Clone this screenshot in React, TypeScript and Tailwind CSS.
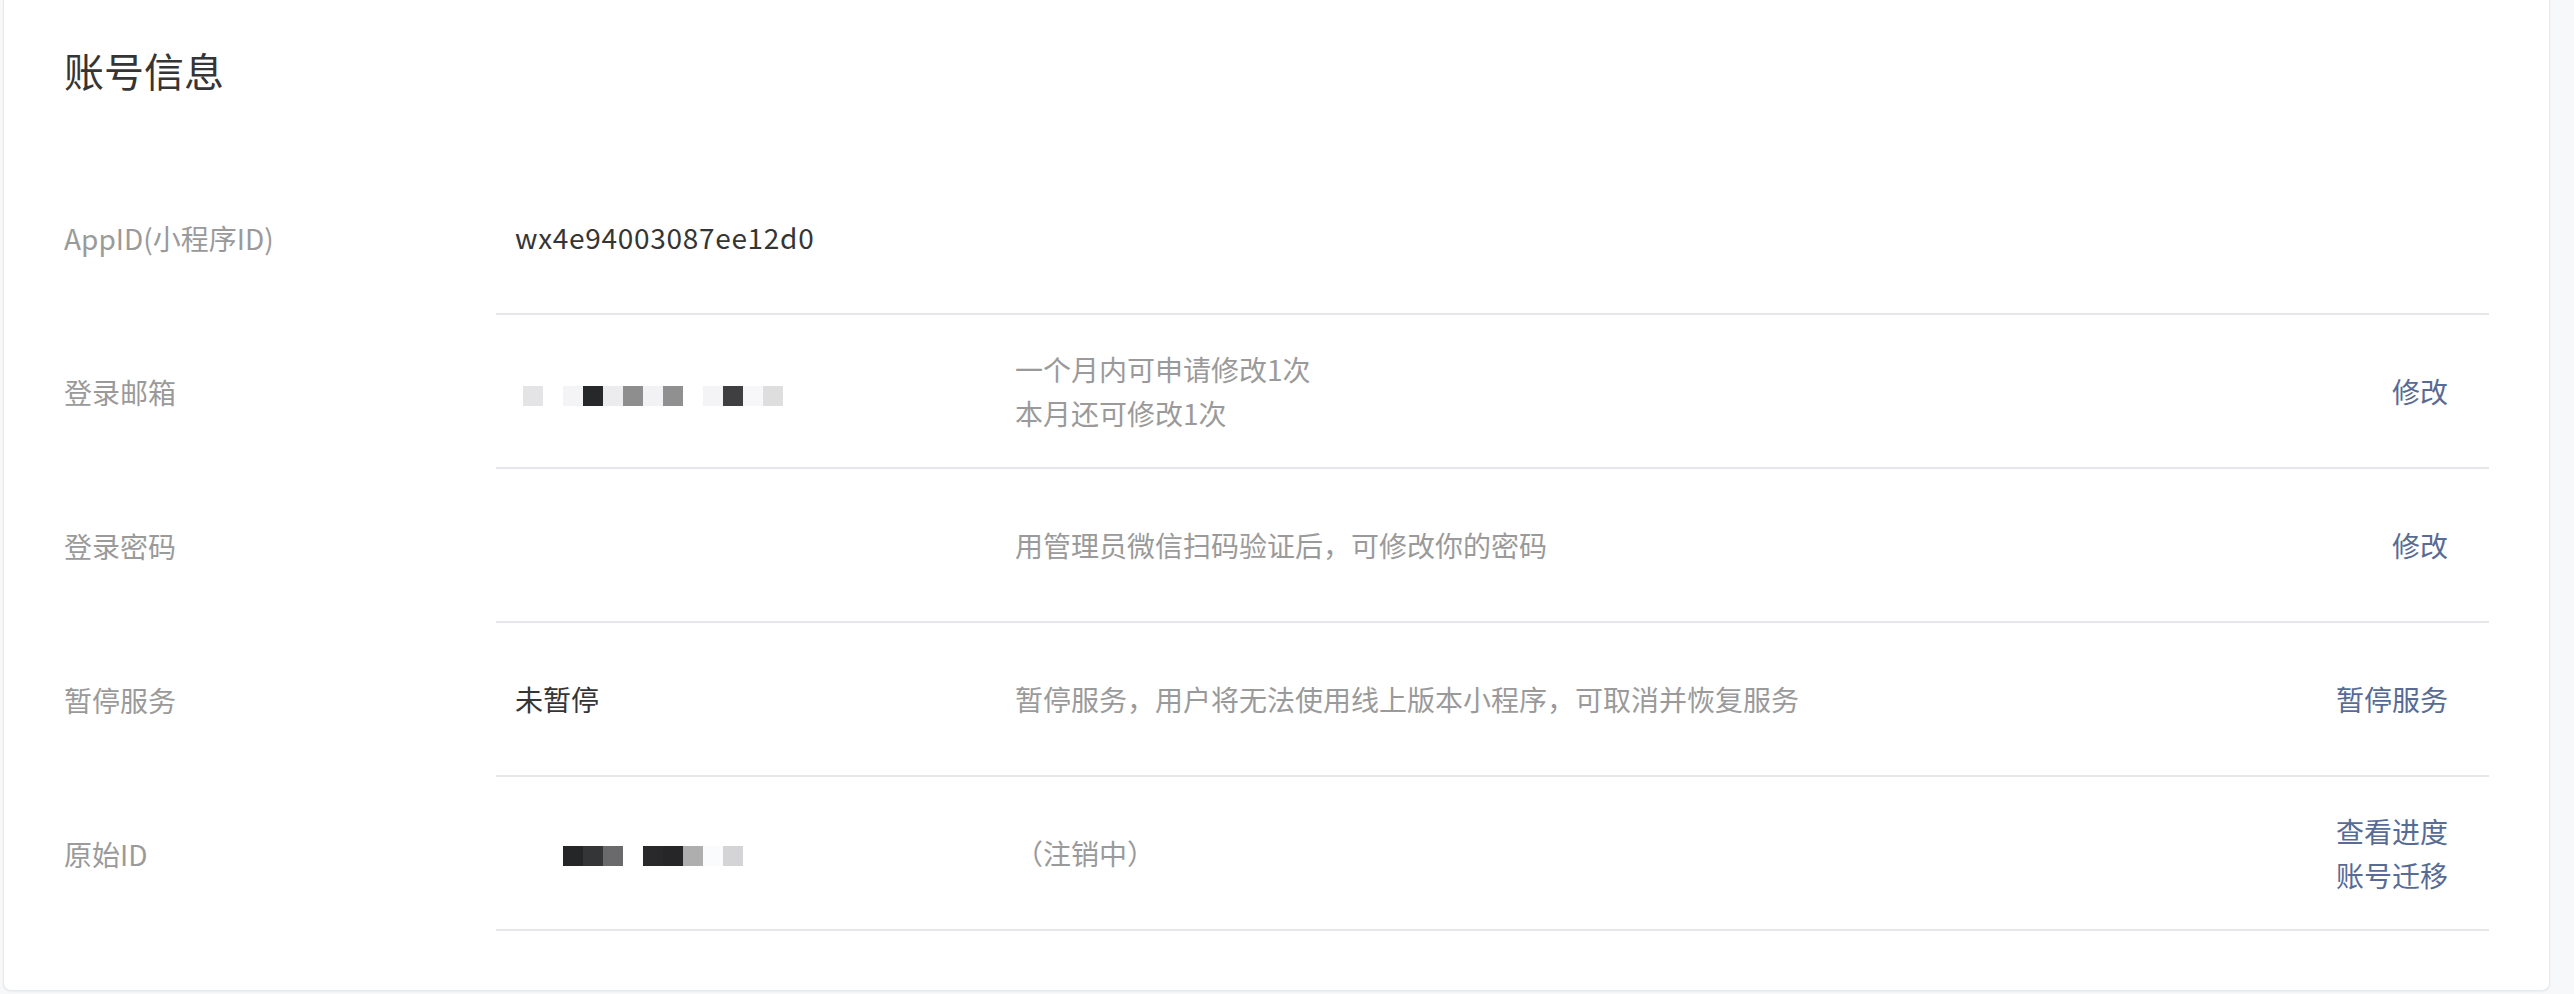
import React from 'react';

const font = { fontFamily: '"Noto Sans CJK SC", "Liberation Sans", sans-serif' };

const emailBlocks = [
  '#e4e4e6', '#ffffff', '#f4f4f6', '#27282a', '#ececee', '#8e8e8e', '#f2f2f4',
  '#909090', '#ffffff', '#f4f4f6', '#3f3f41', '#f7f7f9', '#dededf',
];
const idBlocks = ['#252628', '#343537', '#6a6a6c', '#ffffff', '#29292b', '#262628', '#aeaeae', '#fafbfd', '#d4d4d6'];

const Pixels: React.FC<{ colors: string[]; className?: string }> = ({ colors, className }) => (
  <div className={`flex ${className ?? ''}`}>
    {colors.map((c, i) => (
      <div key={i} className="h-[20px] w-[20px]" style={{ backgroundColor: c }} />
    ))}
  </div>
);

type Row = {
  label: string;
  value?: React.ReactNode;
  desc?: React.ReactNode;
  actions?: string[];
};

const rows: Row[] = [
  { label: 'AppID(小程序ID)', value: <span className="tracking-[0.7px] text-[#353535]">wx4e94003087ee12d0</span> },
  {
    label: '登录邮箱',
    value: <Pixels colors={emailBlocks} className="ml-[8px] mt-[10px]" />,
    desc: (
      <>
        <div>一个月内可申请修改1次</div>
        <div>本月还可修改1次</div>
      </>
    ),
    actions: ['修改'],
  },
  { label: '登录密码', desc: '用管理员微信扫码验证后，可修改你的密码', actions: ['修改'] },
  {
    label: '暂停服务',
    value: <span className="text-[#353535]">未暂停</span>,
    desc: '暂停服务，用户将无法使用线上版本小程序，可取消并恢复服务',
    actions: ['暂停服务'],
  },
  {
    label: '原始ID',
    value: <Pixels colors={idBlocks} className="ml-[48px] mt-[5px]" />,
    desc: '（注销中）',
    actions: ['查看进度', '账号迁移'],
  },
];

export default function App() {
  return (
    <div className="min-h-[994px] bg-[#f6f8f9] pl-[3px] pr-[24px] pb-[3px]" style={font}>
      <div className="rounded-b-[8px] border border-t-0 border-[#e6e9ec] bg-white px-[60px] pt-[42px] pb-[59px] shadow-[0_1px_2px_rgba(0,0,0,0.05)]">
        <h1 className="mb-[63px] text-[40px] font-normal leading-[56px] text-[#353535]">账号信息</h1>
        {rows.map((row) => (
          <div key={row.label} className="flex text-[28px] leading-[44px]">
            <div className="flex w-[432px] shrink-0 items-center text-[#9a9a9a]">{row.label}</div>
            <div className="flex h-[154px] flex-1 items-center border-b-2 border-[#e7e7eb]">
              <div className="flex w-[519px] shrink-0 items-center pl-[19px]">{row.value}</div>
              <div className="flex-1 text-[#9a9a9a]">{row.desc}</div>
              <div className="flex flex-col items-end pr-[41px] text-[#576b95]">
                {row.actions?.map((a) => (
                  <a key={a} className="cursor-pointer">{a}</a>
                ))}
              </div>
            </div>
          </div>
        ))}
      </div>
    </div>
  );
}
